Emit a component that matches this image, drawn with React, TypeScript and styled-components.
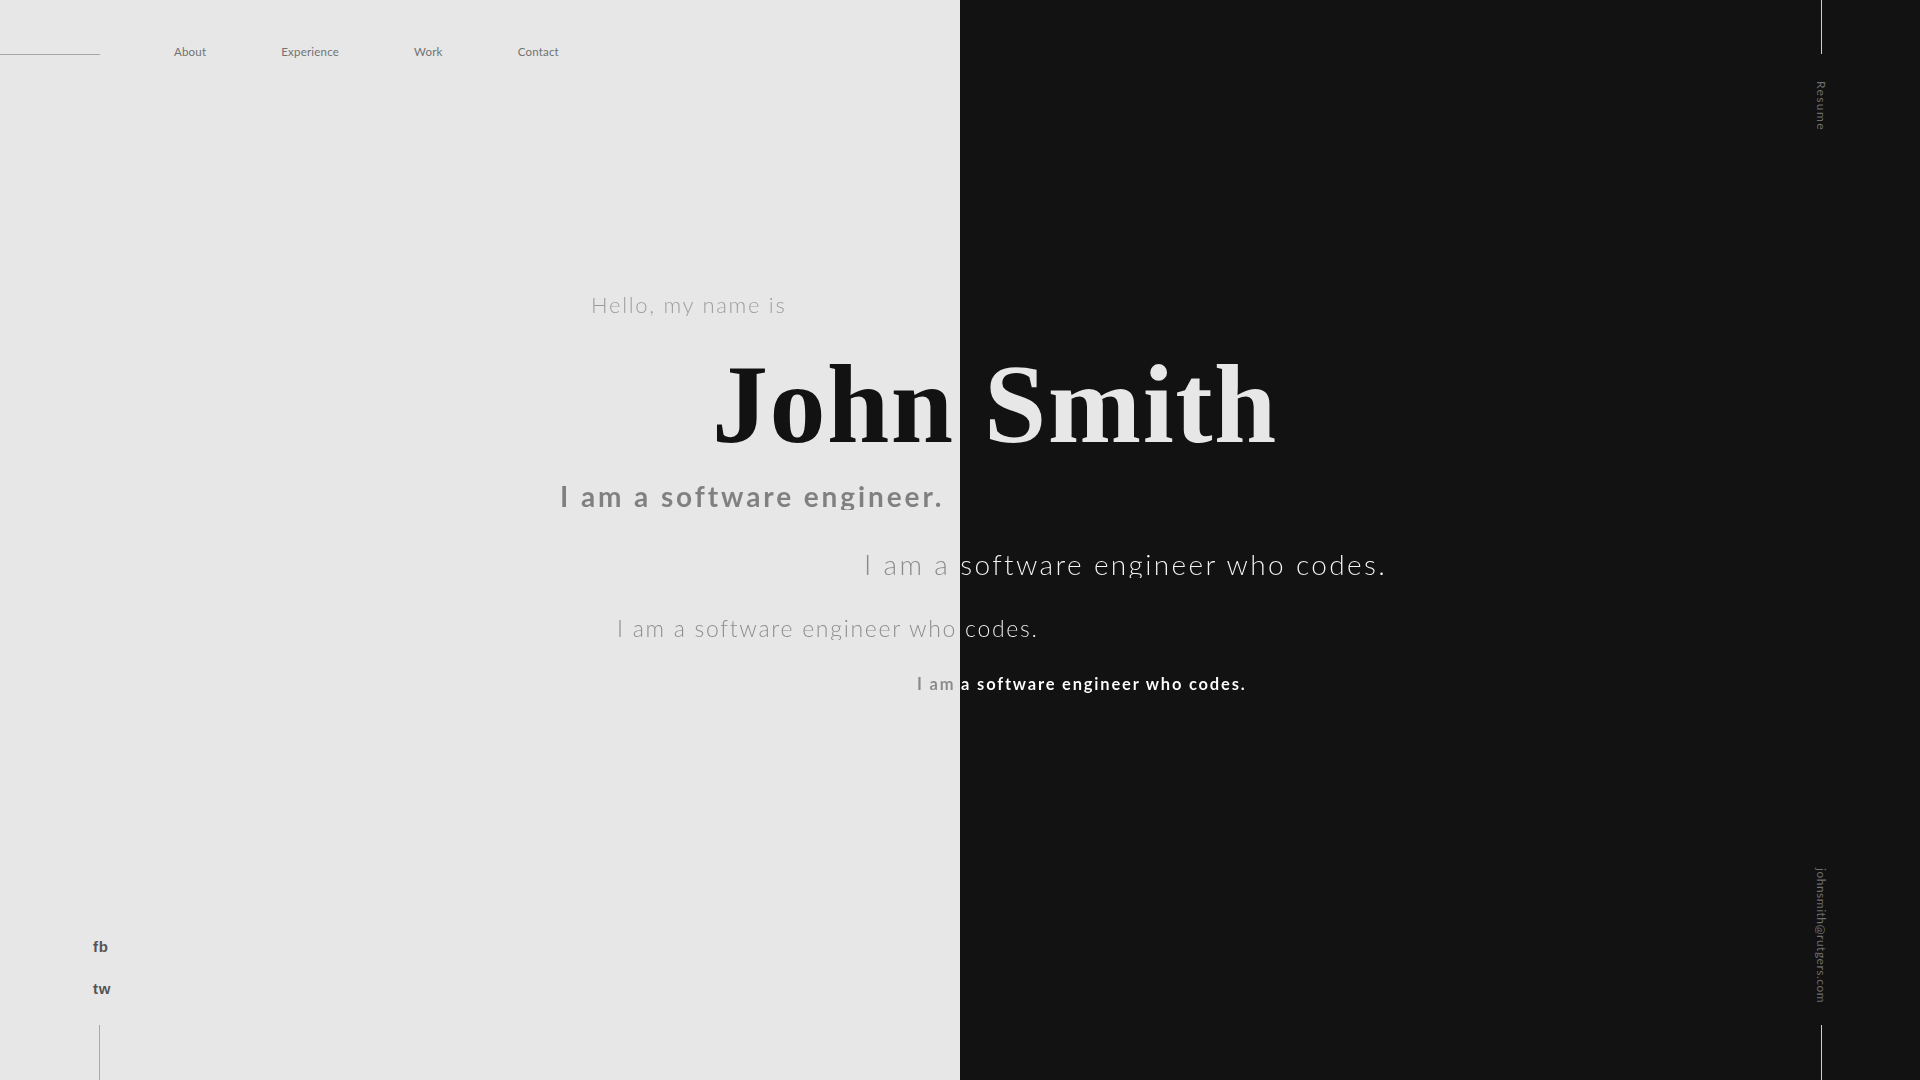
import React from "react";
import styled, { createGlobalStyle } from "styled-components";

const GlobalStyle = createGlobalStyle`
  html, body { margin: 0; padding: 0; }
  body { font-family: "Lato", "Noto Sans", sans-serif; overflow: hidden; }
  * { box-sizing: border-box; }
`;

const LIGHT = "#e7e7e7";
const DARK = "#121212";

const Page = styled.div`
  width: 100%;
  height: 100vh;
  display: flex;
  flex-direction: column;
  background: linear-gradient(90deg, ${LIGHT} 50%, ${DARK} 50%);
`;

const Header = styled.header`
  height: 140px;
  display: flex;
  align-items: flex-start;
`;

const HLine = styled.div`
  width: 100px;
  height: 1px;
  margin-top: 54px;
  background: #a9a9a9;
`;

const Nav = styled.nav`
  display: flex;
  gap: 75px;
  margin-left: 74px;
  margin-top: 45px;
`;

const NavLink = styled.a`
  font-family: "Lato", sans-serif;
  font-weight: 400;
  font-size: 11.5px;
  line-height: 14px;
  letter-spacing: 0.2px;
  color: #727272;
  text-decoration: none;
`;

const Rail = styled.div<{ $bottom?: boolean }>`
  margin-left: auto;
  margin-right: 89px;
  width: 20px;
  display: flex;
  flex-direction: column;
  align-items: center;
  justify-content: ${(p) => (p.$bottom ? "flex-end" : "flex-start")};
`;

const VLine = styled.div<{ $h: number; $c: string; $shift?: number; $mt?: number }>`
  width: 1px;
  height: ${(p) => p.$h}px;
  background: ${(p) => p.$c};
  margin-left: ${(p) => p.$shift ?? 0}px;
  margin-top: ${(p) => p.$mt ?? 0}px;
`;

const VerticalText = styled.span<{ $mt?: number; $mb?: number; $ls: number }>`
  writing-mode: vertical-rl;
  font-family: "Lato", sans-serif;
  font-weight: 400;
  font-size: 12px;
  letter-spacing: ${(p) => p.$ls}px;
  color: #6f6f6f;
  margin-top: ${(p) => p.$mt ?? 0}px;
  margin-bottom: ${(p) => p.$mb ?? 0}px;
`;

const Main = styled.main`
  flex: 1;
  display: flex;
  flex-direction: column;
`;

const Line = styled.div<{
  $left: number;
  $mt: number;
  $size: number;
  $weight: number;
  $ls: number;
  $l: string;
  $r: string;
  $serif?: boolean;
}>`
  width: 100%;
  white-space: nowrap;
  padding-left: ${(p) => p.$left}px;
  margin-top: ${(p) => p.$mt}px;
  font-family: ${(p) =>
    p.$serif ? `"Liberation Serif", "DejaVu Serif", serif` : `"Lato", "Noto Sans", sans-serif`};
  font-size: ${(p) => p.$size}px;
  font-weight: ${(p) => p.$weight};
  letter-spacing: ${(p) => p.$ls}px;
  line-height: 1;
  background: linear-gradient(90deg, ${(p) => p.$l} 50%, ${(p) => p.$r} 50%);
  -webkit-background-clip: text;
  background-clip: text;
  color: transparent;
`;

const Footer = styled.footer`
  height: 150px;
  display: flex;
  align-items: flex-end;
`;

const Social = styled.div`
  margin-left: 93px;
  display: flex;
  flex-direction: column;
  align-items: flex-start;
`;

const SocialLink = styled.a<{ $mt: number }>`
  font-family: "Liberation Sans", "Arial", sans-serif;
  font-weight: 700;
  font-size: 15px;
  line-height: 17px;
  letter-spacing: 0.8px;
  color: #555555;
  text-decoration: none;
  margin-top: ${(p) => p.$mt}px;
`;

export default function App() {
  return (
    <>
      <GlobalStyle />
      <Page>
        <Header>
          <HLine />
          <Nav>
            <NavLink>About</NavLink>
            <NavLink>Experience</NavLink>
            <NavLink>Work</NavLink>
            <NavLink>Contact</NavLink>
          </Nav>
          <Rail>
            <VLine $h={54} $c="#cfcfcf" />
            <VerticalText $mt={27} $ls={1.4}>Resume</VerticalText>
          </Rail>
        </Header>
        <Main>
          <Line $left={591} $mt={154} $size={22} $weight={300} $ls={1.7} $l="#9a9a9a" $r="#9a9a9a">
            Hello, my name is
          </Line>
          <Line $left={712} $mt={32} $size={112} $weight={700} $ls={1.5} $l={DARK} $r={LIGHT} $serif>
            John Smith
          </Line>
          <Line $left={560} $mt={22} $size={28} $weight={700} $ls={2.9} $l="#808080" $r="#ffffff">
            I am a software engineer.
          </Line>
          <Line $left={864} $mt={40} $size={28} $weight={300} $ls={2.35} $l="#8a8a8a" $r="#f5f5f5">
            I am a software engineer who codes.
          </Line>
          <Line $left={617} $mt={39} $size={23} $weight={300} $ls={1.7} $l="#8a8a8a" $r="#f5f5f5">
            I am a software engineer who codes.
          </Line>
          <Line $left={917} $mt={36} $size={16.5} $weight={700} $ls={1.8} $l="#8a8a8a" $r="#ffffff">
            I am a software engineer who codes.
          </Line>
        </Main>
        <Footer>
          <Social>
            <SocialLink $mt={0}>fb</SocialLink>
            <SocialLink $mt={25}>tw</SocialLink>
            <VLine $h={55} $c="#a9a9a9" $shift={6} $mt={28} />
          </Social>
          <Rail $bottom>
            <VerticalText $mb={22} $ls={0.5}>johnsmith@rutgers.com</VerticalText>
            <VLine $h={55} $c="#cfcfcf" />
          </Rail>
        </Footer>
      </Page>
    </>
  );
}
